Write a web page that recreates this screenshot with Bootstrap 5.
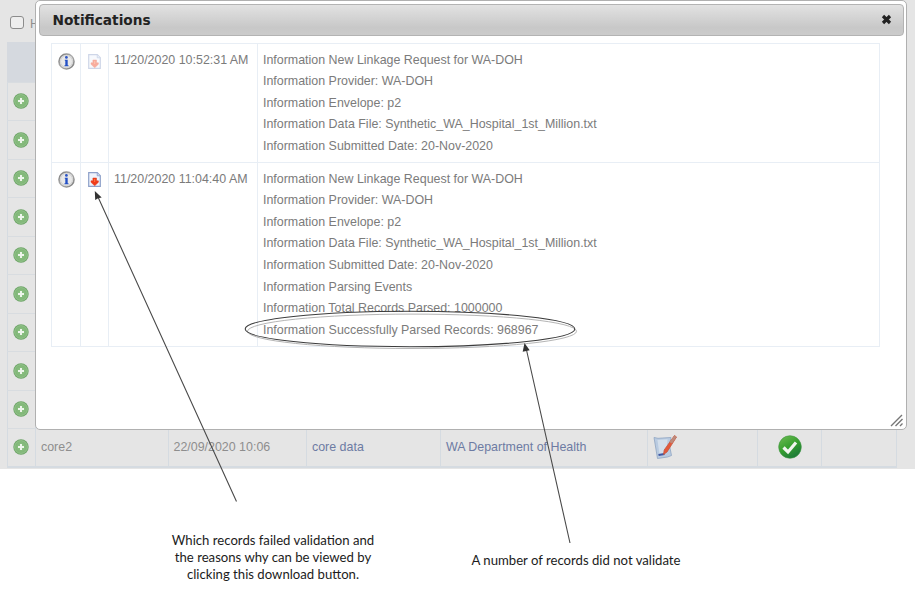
<!DOCTYPE html>
<html lang="en">
<head>
<meta charset="utf-8">
<meta name="viewport" content="width=device-width, initial-scale=1">
<title>Notifications</title>
<link href="https://cdn.jsdelivr.net/npm/bootstrap@5.3.0/dist/css/bootstrap.min.css" rel="stylesheet">
<style>
body { width: 916px; height: 599px; background: #fff; font-family: "Liberation Sans", Arial, sans-serif; font-size: 12.43px; color: #7b7b7b; overflow: hidden; }
.backdrop-page { width: 915px; height: 469px; background: #e5e5e5; padding: 0 18px 0 7px; color: #8e8e8e; }
.filter-bar { height: 42px; padding: 15px 0 0 3px; gap: 6px; }
.tick { width: 14px; height: 13px; margin-top: 1px; border: 1px solid #8c8c8c; border-radius: 3px; background: #eee; }
.head-strip { height: 39.5px; background: #d5d9df; }
.grid-row { display: grid; grid-template-columns: 28px 132.5px 138.5px 134px 206.5px 110.5px 64px 76px; height: 38.5px; }
.grid-row > div { border-left: 1px solid #d5dbe1; border-top: 1px solid #d8dce0; display: flex; align-items: center; padding-left: 5px; }
.grid-row > div:last-child { border-right: 1px solid #d5dbe1; }
.grid-row:last-child { height: 39.5px; border-bottom: 2px solid #d5dbe1; }
.grid-row .bluish { color: #6d7ba3; }
.dialog-box { left: 35px; top: 0; width: 872px; height: 430px; background: #fff; border: 1.5px solid #b0b0b0; border-radius: 5px; padding: 2.5px; }
.dialog-head { height: 32.5px; border: 1px solid #b3b3b3; border-radius: 4px; background: linear-gradient(#e2e2e2, #c8c8c8 75%, #cbcbcb); padding: 0 11px 0 13px; font: bold 13.7px "DejaVu Sans", sans-serif; color: #222; }
.notes { margin: 7px 0 0 12.5px; width: 829px; border: 1px solid #e8eef5; }
.note-row { display: grid; grid-template-columns: 28px 28px 149px 1fr; }
.note-row + .note-row { border-top: 1px solid #e8eef5; }
.note-row > div { padding: 5.6px 0 4.4px 5px; line-height: 21.6px; white-space: nowrap; }
.note-row > div + div { border-left: 1px solid #e8eef5; }
.note-row > .pic { padding: 8.5px 0 0 5.5px; line-height: 0; }
.note-row > .file-cell { padding: 9.5px 0 0 7px; }
.faded { opacity: .42; }
.markup { left: 0; top: 0; }
.captions { font-family: Lato, sans-serif; color: #1c1c1c; font-size: 13.15px; line-height: 17.2px; padding: 63px 0 0 160px; }
.cap-a { width: 226px; }
.cap-b { width: 250px; margin: 20px 0 0 65px; }
</style>
<script src="https://cdn.jsdelivr.net/npm/bootstrap@5.3.0/dist/js/bootstrap.bundle.min.js"></script>
</head>
<body class="position-relative">
<svg width="0" height="0" class="position-absolute">
  <defs>
    <radialGradient id="gPlus"><stop offset="0" stop-color="#8fc486"/><stop offset=".65" stop-color="#82b879"/><stop offset="1" stop-color="#6ba265"/></radialGradient>
    <linearGradient id="gRing" x2="1" y2="1"><stop offset="0" stop-color="#777"/><stop offset=".5" stop-color="#b0b0b0"/><stop offset="1" stop-color="#777"/></linearGradient>
    <linearGradient id="gOk" x2=".6" y2="1"><stop offset="0" stop-color="#72bd55"/><stop offset=".55" stop-color="#37a02f"/><stop offset="1" stop-color="#1d7b39"/></linearGradient>
    <symbol id="plus" viewBox="0 0 16 16"><circle cx="8" cy="8" r="7.7" fill="url(#gPlus)"/><circle cx="8" cy="8" r="6.3" fill="none" stroke="#a2cf9a" stroke-width=".7"/><path d="M8 5v6M5 8h6" stroke="#edf5eb" stroke-width="2"/></symbol>
    <symbol id="info" viewBox="0 0 17 17"><circle cx="8.5" cy="8.5" r="7.5" fill="#e9e9e9" stroke="url(#gRing)" stroke-width="1.6"/><circle cx="8.5" cy="8.5" r="6" fill="none" stroke="#d2d2d2" stroke-width="1"/><circle cx="8.4" cy="4.4" r="1.4" fill="#2d55c5"/><path d="M6.800 6.700h2.900v5.500h.8v1.100H6.500v-1.100h.8V7.800h-.5z" fill="#2450c5"/></symbol>
    <symbol id="file" viewBox="0 0 13 15"><path d="M.7.7h8.600l3 3v10.600H.7z" fill="#eef2fb" stroke="#8da0c9" stroke-width="1.200"/><path d="M9.200.8v3h3" fill="#cbd7ee" stroke="#8095c5" stroke-width=".7"/><path d="M4.900 6h3.600v2.800h1.900v1.500l-3.700 3.500-3.700-3.500V8.800h1.900z" fill="#f03b18" stroke="#dd3a1c" stroke-width=".5"/><path d="M6.700 7v3" stroke="#ff7a45" stroke-width="1" fill="none"/></symbol>
  </defs>
</svg>

<main class="backdrop-page">
  <div class="filter-bar d-flex"><span class="tick"></span><span>Hide</span></div>
  <div class="head-strip"></div>
  <div class="grid-row"><div><svg width="16" height="16"><use href="#plus"/></svg></div><div></div><div></div><div></div><div></div><div></div><div></div><div></div></div>
  <div class="grid-row"><div><svg width="16" height="16"><use href="#plus"/></svg></div><div></div><div></div><div></div><div></div><div></div><div></div><div></div></div>
  <div class="grid-row"><div><svg width="16" height="16"><use href="#plus"/></svg></div><div></div><div></div><div></div><div></div><div></div><div></div><div></div></div>
  <div class="grid-row"><div><svg width="16" height="16"><use href="#plus"/></svg></div><div></div><div></div><div></div><div></div><div></div><div></div><div></div></div>
  <div class="grid-row"><div><svg width="16" height="16"><use href="#plus"/></svg></div><div></div><div></div><div></div><div></div><div></div><div></div><div></div></div>
  <div class="grid-row"><div><svg width="16" height="16"><use href="#plus"/></svg></div><div></div><div></div><div></div><div></div><div></div><div></div><div></div></div>
  <div class="grid-row"><div><svg width="16" height="16"><use href="#plus"/></svg></div><div></div><div></div><div></div><div></div><div></div><div></div><div></div></div>
  <div class="grid-row"><div><svg width="16" height="16"><use href="#plus"/></svg></div><div></div><div></div><div></div><div></div><div></div><div></div><div></div></div>
  <div class="grid-row"><div><svg width="16" height="16"><use href="#plus"/></svg></div><div></div><div></div><div></div><div></div><div></div><div></div><div></div></div>
  <div class="grid-row">
    <div><svg width="16" height="16"><use href="#plus"/></svg></div>
    <div>core2</div><div>22/09/2020 10:06</div><div class="bluish">core data</div><div class="bluish">WA Department of Health</div>
    <div><svg width="24" height="24" viewBox="0 0 24 24"><path d="M1 2.500l4 .8 13-.8-1.500 8 2 10-4 1.500L4.500 23.500z" fill="#b9cbe1" stroke="#8fa5c2" stroke-width=".8"/><path d="M4.500 5l10-.7-1 14-7 1z" fill="#d3dfec"/><path d="M5.500 20l6-1" stroke="#3e57a3" stroke-width="2"/><path d="M21.500.5l2 1.500L14 17l-3.500 2.500.7-4.500z" fill="#e4593b" stroke="#c4553f" stroke-width=".8"/><path d="M21.500.5l2 1.500-4.500 6.500-2.600-1.600z" fill="#bd8a7c"/></svg></div>
    <div class="justify-content-center p-0"><svg width="24" height="24" viewBox="0 0 24 24"><circle cx="12" cy="12" r="11.300" fill="url(#gOk)" stroke="#3b933d" stroke-width=".6"/><path d="M5.500 12.500l4.500 4.500 8-9.500" fill="none" stroke="#f1f5ef" stroke-width="3.200"/></svg></div>
    <div></div>
  </div>
</main>

<section class="dialog-box position-absolute">
  <header class="dialog-head d-flex align-items-center justify-content-between"><span>Notifications</span>
    <svg width="11" height="11" viewBox="0 0 11 11"><path d="M2 2l7 7M9 2L2 9" stroke="#222" stroke-width="3.200"/></svg></header>
  <div class="notes">
    <div class="note-row">
      <div class="pic"><svg width="17" height="17"><use href="#info"/></svg></div>
      <div class="pic file-cell"><svg class="faded" width="13" height="15"><use href="#file"/></svg></div>
      <div>11/20/2020 10:52:31 AM</div>
      <div>Information New Linkage Request for WA-DOH<br>Information Provider: WA-DOH<br>Information Envelope: p2<br>Information Data File: Synthetic_WA_Hospital_1st_Million.txt<br>Information Submitted Date: 20-Nov-2020</div>
    </div>
    <div class="note-row">
      <div class="pic"><svg width="17" height="17"><use href="#info"/></svg></div>
      <div class="pic file-cell"><svg width="13" height="15"><use href="#file"/></svg></div>
      <div>11/20/2020 11:04:40 AM</div>
      <div>Information New Linkage Request for WA-DOH<br>Information Provider: WA-DOH<br>Information Envelope: p2<br>Information Data File: Synthetic_WA_Hospital_1st_Million.txt<br>Information Submitted Date: 20-Nov-2020<br>Information Parsing Events<br>Information Total Records Parsed: 1000000<br>Information Successfully Parsed Records: 968967</div>
    </div>
  </div>
</section>

<div class="captions d-flex">
  <div class="cap-a text-center">Which records failed validation and<br>the reasons why can be viewed by<br>clicking this download button.</div>
  <div class="cap-b text-center">A number of records did not validate</div>
</div>

<svg class="markup position-absolute" width="916" height="599" fill="none">
  <path d="M891 426l11-11M895.500 426l7-7M900 426l2.500-2.500" stroke="#777" stroke-width="1.400"/>
  <ellipse cx="412" cy="331.300" rx="164.500" ry="17.200" stroke="#b5b5b5"/>
  <ellipse cx="410" cy="329" rx="164.800" ry="17.700" stroke="#3c3c3c" stroke-width="1.100"/>
  <path d="M98 197L236.500 501.500M526.500 350L570 543" stroke="#4a4a4a" stroke-width="1.100"/>
  <path d="M94.800 191l.4 9 3-1.800 3.500-.7zM524.500 343l-1.800 8.700 3.500-.8 3.500-.7z" fill="#333"/>
</svg>
</body>
</html>
